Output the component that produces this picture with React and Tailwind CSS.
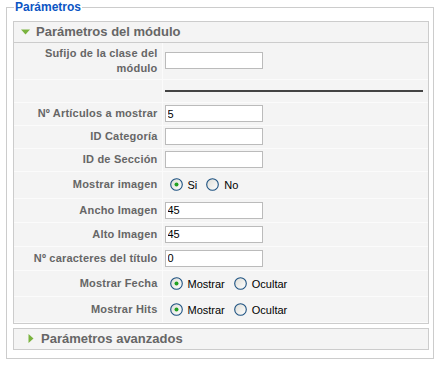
import React from 'react';

function Radio({ checked }) {
  return (
    <svg width="13" height="13" viewBox="0 0 13 13" className="shrink-0">
      <defs>
        <linearGradient id="rg" x1="0" y1="0" x2="1" y2="1">
          <stop offset="0" stopColor="#dcdcd6" />
          <stop offset="1" stopColor="#ffffff" />
        </linearGradient>
      </defs>
      <circle cx="6.5" cy="6.5" r="5.8" fill="url(#rg)" stroke="#1c5180" strokeWidth="1.1" />
      {checked && <circle cx="6.5" cy="6.5" r="2" fill="#21a121" />}
    </svg>
  );
}

function RadioGroup({ options, value }) {
  return (
    <div className="flex items-center pl-[5px] text-[11px] text-black font-normal">
      {options.map((o, i) => (
        <label key={o} className={`flex items-center ${i > 0 ? 'ml-[9px]' : ''}`}>
          <Radio checked={o === value} />
          <span className="ml-[5px] mt-[2px]">{o}</span>
        </label>
      ))}
    </div>
  );
}

function TextInput({ value }) {
  return (
    <input
      type="text"
      defaultValue={value}
      className="block w-[98px] h-[17px] border border-[#bbbbbb] bg-white px-[2px] text-[11px] text-black outline-none"
    />
  );
}

function Triangle({ down }) {
  return down ? (
    <svg width="9" height="6" viewBox="0 0 9 6" className="mr-[6px]">
      <path d="M0 0.5 H9 L4.5 5.5 Z" fill="#7ab33e" />
    </svg>
  ) : (
    <svg width="6" height="9" viewBox="0 0 6 9" className="ml-[6px] mr-[4px]">
      <path d="M0.5 0 V9 L5.5 4.5 Z" fill="#7ab33e" />
    </svg>
  );
}

const rows = [
  { label: 'Sufijo de la clase del módulo', kind: 'input', value: '', h: 'h-[36px]' },
  { label: '', kind: 'hr', h: 'h-[23px]' },
  { label: 'Nº Artículos a mostrar', kind: 'input', value: '5', h: 'h-[23px]' },
  { label: 'ID Categoría', kind: 'input', value: '', h: 'h-[23px]' },
  { label: 'ID de Sección', kind: 'input', value: '', h: 'h-[23px]' },
  { label: 'Mostrar imagen', kind: 'radio', options: ['Si', 'No'], value: 'Si', h: 'h-[27px]' },
  { label: 'Ancho Imagen', kind: 'input', value: '45', h: 'h-[24px]' },
  { label: 'Alto Imagen', kind: 'input', value: '45', h: 'h-[24px]' },
  { label: 'Nº caracteres del título', kind: 'input', value: '0', h: 'h-[24px]' },
  { label: 'Mostrar Fecha', kind: 'radio', options: ['Mostrar', 'Ocultar'], value: 'Mostrar', h: 'h-[26px]' },
  { label: 'Mostrar Hits', kind: 'radio', options: ['Mostrar', 'Ocultar'], value: 'Mostrar', h: 'h-[26px]' },
];

export default function App() {
  return (
    <div className="w-[440px] h-[366px] bg-white pl-[6px] font-['Liberation_Sans',Arial,sans-serif]">
      <fieldset className="w-[428px] border border-[#cccccc] pl-[6px] pr-[4px] pt-[6px] pb-[8px]">
        <legend className="ml-[1px] px-[1px] text-[12px] leading-[15px] font-bold text-[#0b55c4]">
          Parámetros
        </legend>

        <div className="border border-[#cccccc]">
          <h3 className="flex items-center h-[21px] pl-[7px] border-b border-[#cccccc] bg-[#f4f4f4] text-[13px] font-bold text-[#666666]">
            <Triangle down />
            <span>Parámetros del módulo</span>
          </h3>
          <table className="w-full border-collapse bg-[#f4f4f4]">
            <tbody>
              {rows.map((r, i) => (
                <tr key={i} className={r.h}>
                  <td className="w-[148px] border-r border-b border-[#fbfbfb] pr-[4px] pl-[6px] text-right align-middle text-[11px] leading-[15px] font-bold tracking-[0.2px] text-[#666666]">
                    {r.label}
                  </td>
                  <td className="border-b border-[#fbfbfb] pl-[2px] align-middle">
                    {r.kind === 'input' && <TextInput value={r.value} />}
                    {r.kind === 'hr' && <div className="mr-[5px] mt-[1px] border-t-2 border-[#444444]" />}
                    {r.kind === 'radio' && <RadioGroup options={r.options} value={r.value} />}
                  </td>
                </tr>
              ))}
            </tbody>
          </table>
        </div>

        <div className="mt-[4px] border border-[#cccccc]">
          <h3 className="flex items-center h-[20px] pl-[8px] bg-[#f4f4f4] text-[13px] font-bold text-[#666666]">
            <Triangle />
            <span className="ml-[3px]">Parámetros avanzados</span>
          </h3>
        </div>
      </fieldset>
    </div>
  );
}
